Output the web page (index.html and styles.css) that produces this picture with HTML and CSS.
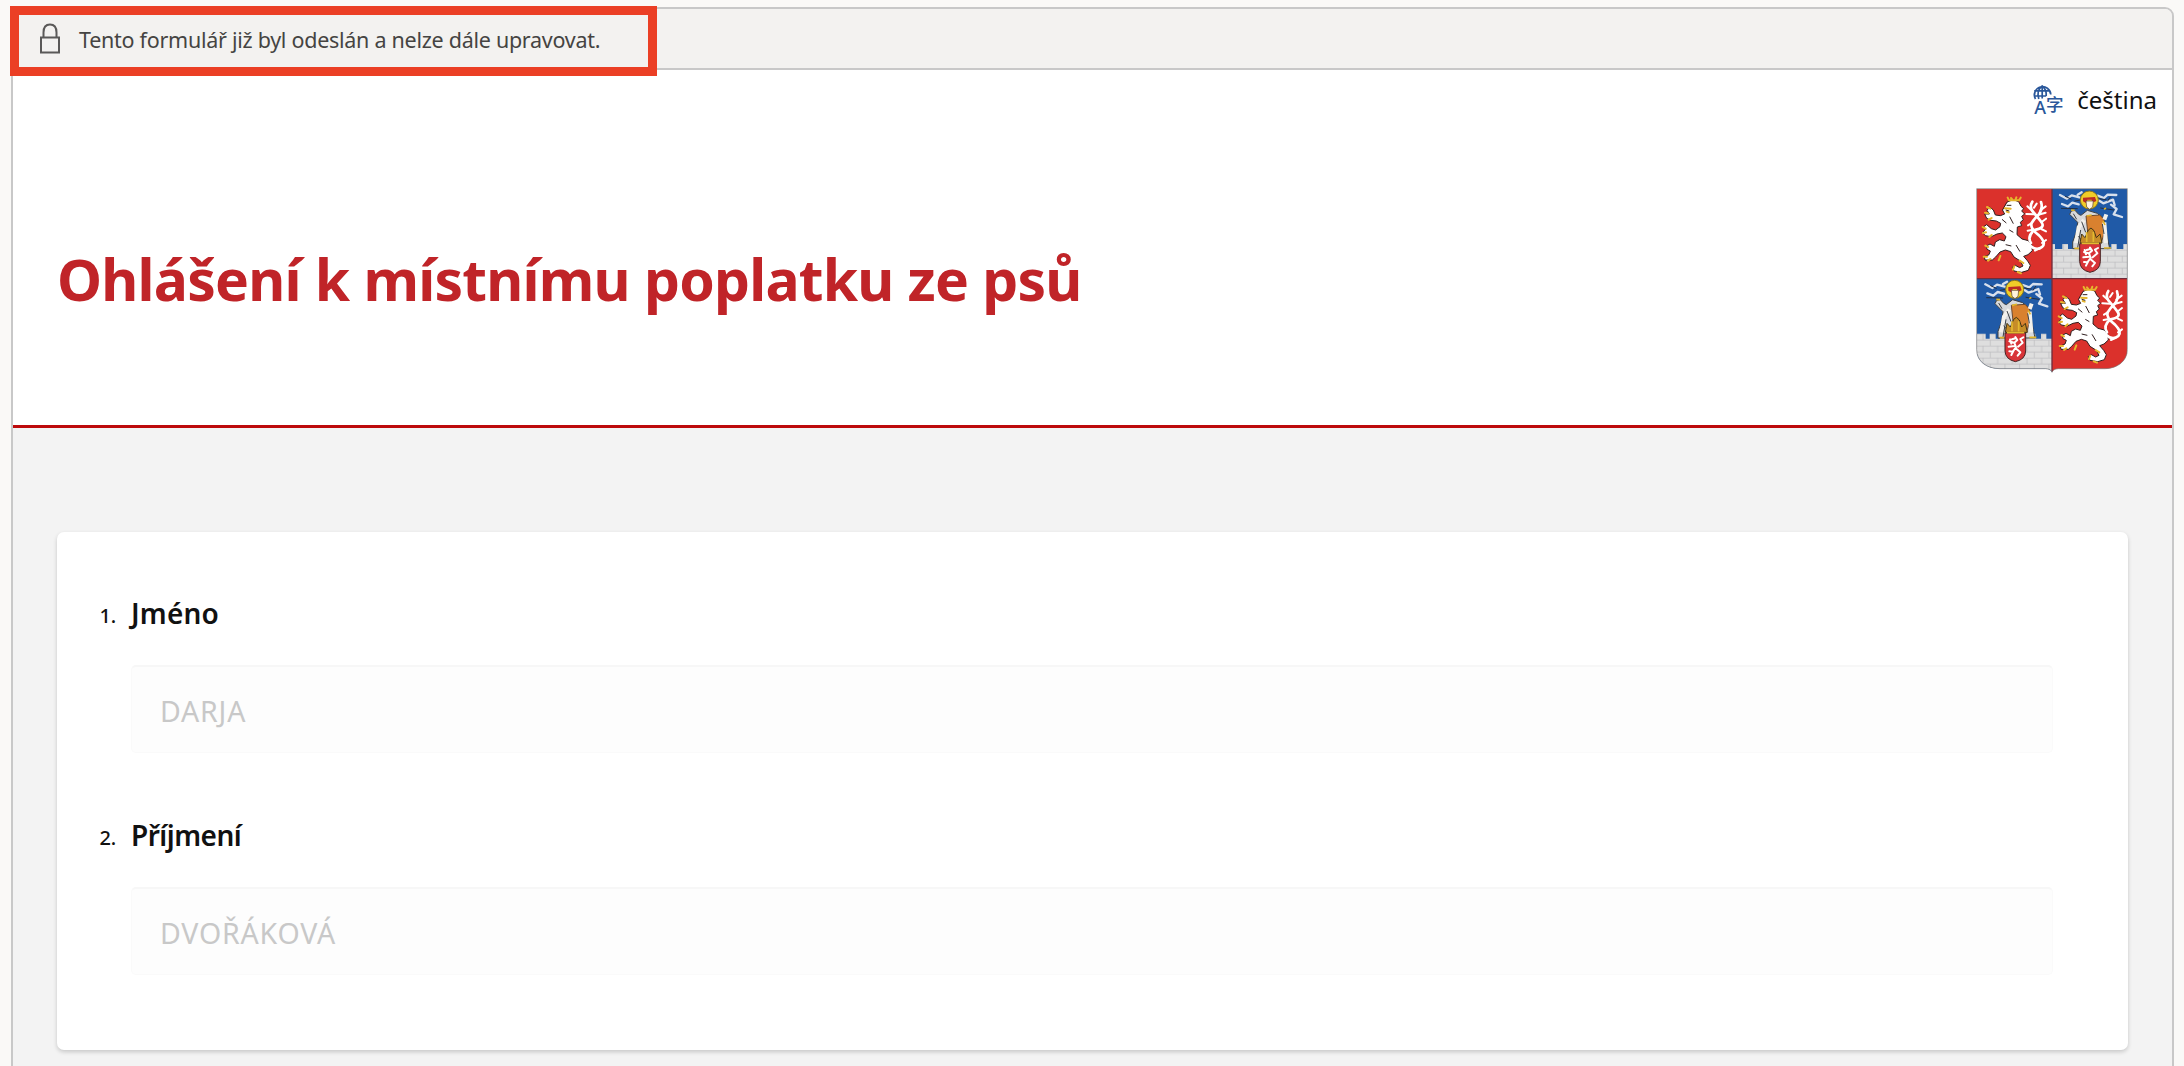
FILE: index.html
```html
<!DOCTYPE html>
<html lang="cs">
<head>
<meta charset="utf-8">
<title>Ohlášení k místnímu poplatku ze psů</title>
<link rel="stylesheet" href="styles.css">
</head>
<body>
<main class="panel">
  <div class="notice">
    <svg class="lock" viewBox="0 0 22 31" fill="none" stroke="#5a5958" stroke-width="2">
      <path d="M2 14.5h18v15H2zM4.5 14V9.500C4.500 4 7 1.500 11 1.500S17.500 4 17.500 9.500V14"/>
    </svg>
    <span class="notice-text">Tento formulář již byl odeslán a nelze dále upravovat.</span>
    <div class="highlight"></div>
  </div>
  <header class="header">
    <div class="language">
      <svg class="translate" viewBox="0 0 30 30" fill="none" stroke="#2a579a" stroke-width="1.700">
        <path d="M2.500 14A8.200 8.200 0 1 1 17.800 9.500M1.200 5.800h16M1.200 11h12M9.200 1v12.500M5.800 14C4.300 9 5 4 9.200 1c3.300 2.500 4.300 6 4 10"/>
        <text class="glyph" x="1.300" y="29" font-size="18">A</text>
        <text class="glyph cjk" x="13" y="26" font-size="17.500">字</text>
      </svg>
      <span class="language-name">čeština</span>
    </div>
    <div class="title-row">
      <h1 class="title">Ohlášení k místnímu poplatku ze psů</h1>
      <svg class="crest" viewBox="33 25 456 558">
        <defs>
          <clipPath id="shield"><path d="M35 27H487V510C487 545 455 567 420 567H280Q264 568 261 578Q258 568 242 567H105C65 567 35 545 35 510Z"/></clipPath>
          <g id="lion">
            <g stroke="#302020" stroke-width="3" stroke-linejoin="round" stroke-linecap="round">
              <path fill="#fff" d="M127 67L144 60 161 66 168 80 176 87 170 94 179 103 170 110 175 120 166 128 170 138 157 142 156 165 171 178 190 183 200 195 202 213 189 225 176 230 188 244 196 257 190 272 170 278 147 274 142 263 151 257 164 264 174 259 166 244 147 232 137 216 121 211 105 217 92 232 82 241 60 241 58 231 72 225 76 214 66 209 64 199 75 193 88 200 91 187 104 180 118 184 123 171 112 160 96 163 79 171 61 168 53 159 61 149 56 141 65 135 79 147 92 151 105 141 107 131 94 124 78 122 65 116 59 103 73 103 66 92 74 82 85 91 91 106 106 108 119 103 113 92Z"/>
            </g>
            <g fill="none" stroke="#fff" stroke-linecap="round" stroke-linejoin="round">
              <path stroke-width="8" d="M193 196Q214 216 232 201Q244 189 222 167Q194 146 200 130Q207 118 220 106Q235 88 228 67M198 190Q185 171 208 151Q243 145 229 127Q217 111 202 94Q193 80 202 66"/>
              <path stroke-width="6" d="M202 94L187 80M207 104L184 103M220 105L242 99M226 92L242 80M207 84L215 72M229 128L243 117M229 148L243 155M200 130L189 137M200 151L188 153M231 190L243 181M222 207L210 213"/>
            </g>
            <g fill="none" stroke="#e6b62d" stroke-width="6" stroke-linecap="round">
              <path d="M128 54L132 62H162L167 54M138 55L143 61M154 53L151 61M120 86L137 87M125 96L131 98M66 82L76 87M60 99L69 101M71 120L80 115M53 142L62 147M54 160L63 158M73 172L80 166M61 198L69 202M56 231L66 231M69 243L76 238M101 242L106 229M148 260L144 270M158 277L168 281M164 243L175 250"/>
            </g>
            <path fill="none" stroke="#302020" stroke-width="3" d="M125 77H139M122 91L133 94M134 111L145 132M111 119L124 130M133 151L145 158M122 195L139 199M153 196L165 216"/>
          </g>
          <g id="guardian">
            <g fill="none" stroke="#d8e0ec" stroke-width="7" stroke-linecap="round" stroke-linejoin="round">
              <path d="M343 53L320 47 306 57 285 46M341 74L322 69 309 80 291 73M350 38L338 45M398 48L417 55 428 45 454 46M399 61L415 71 444 60 449 76M438 75L455 88 446 104 471 112"/>
              <path stroke="#243044" stroke-width="3" d="M289 86L337 87M407 85L446 91M347 61L330 64M399 57L423 60M301 50L318 58M436 52L428 64"/>
            </g>
            <circle cx="373" cy="61" r="27" fill="#f0cd28" stroke="#8b7620" stroke-width="3"/>
            <path fill="#ba2b25" d="M354 54L390 52 394 64 382 69 380 60 367 60 364 71 354 65Z"/>
            <path fill="#fff3dc" stroke="#554030" stroke-width="2" d="M363 64H385L383 82 374 89 365 82Z"/>
            <path fill="#d8d9db" stroke="#3c4045" stroke-width="3" d="M348 107L367 92 397 101 416 119 434 207H323V187L334 157 338 128 314 104 319 94 330 92 341 104Z"/>
            <path fill="#d9812f" stroke="#6d4930" stroke-width="3" d="M363 109L404 106 417 119 419 153 409 190 383 186 369 165Z"/>
            <path fill="none" stroke="#f3f1ec" stroke-width="12" d="M333 190L341 143 357 121M418 120L424 104M418 128L423 190"/>
            <path fill="none" stroke="#3c4045" stroke-width="3" d="M350 126L362 158M340 170L352 184M412 133L417 163M325 102L335 119M347 151L338 204"/>
            <path fill="none" stroke="#e1b52a" stroke-width="5" d="M329 92L318 91M423 85L417 89M328 206H342M417 205H438M414 124L420 136M365 109L380 106"/>
            <path fill="#c68c28" stroke="#413414" stroke-width="3" d="M345 190L350 163 360 174 370 151 378 145 387 153 394 174 405 163 411 190Z"/>
            <path fill="#d83438" stroke="#472525" stroke-width="3" d="M344 192H406V246Q405 272 375 278Q345 271 344 246Z"/>
            <path fill="none" stroke="#e3b930" stroke-width="5" d="M350 191H402M365 157V187M385 157V187"/>
            <path fill="none" stroke="#fff" stroke-width="6" stroke-linecap="round" stroke-linejoin="round" d="M375 204L381 213 372 221 377 235 367 248 357 247M371 221L357 217M372 231L355 233M376 238L390 250 382 260M383 233L397 221 390 210 399 205M365 211L376 208M363 224L359 211M370 244L363 258"/>
          </g>
          <pattern id="bricks" x="262" y="210" width="44" height="36" patternUnits="userSpaceOnUse">
            <rect width="44" height="36" fill="#dedede"/>
            <path d="M0 1H44M0 19H44M12 1V19M34 19V36" fill="none" stroke="#b7b8ba" stroke-width="2"/>
          </pattern>
        </defs>
        <g clip-path="url(#shield)">
          <rect x="35" y="27" width="226" height="270" fill="#db312c"/>
          <rect x="261" y="27" width="226" height="270" fill="#205aa7"/>
          <rect x="35" y="297" width="226" height="284" fill="#205aa7"/>
          <rect x="261" y="297" width="226" height="284" fill="#db312c"/>
          <path fill="url(#bricks)" d="M261 193H270V208H292V193H309V208H332V193H418V208H439V193H455V208H475V193H487V295H261Z"/>
          <path fill="url(#bricks)" d="M35 462H62V477H74V462H92V477H105V462H211V477H228V462H244V477H261V580H35Z"/>
          <use href="#lion"/><use href="#lion" x="228" y="268"/>
          <use href="#guardian"/><use href="#guardian" x="-224" y="268"/>
          <path d="M35 297H487M261 27V580" fill="none" stroke="#702c3b" stroke-width="4"/>
        </g>
        <path d="M35 27H487V510C487 545 455 567 420 567H280Q264 568 261 578Q258 568 242 567H105C65 567 35 545 35 510Z" fill="none" stroke="#777" stroke-width="2"/>
      </svg>
    </div>
  </header>
  <div class="content">
    <form class="card">
      <div class="question">
        <span class="number">1.</span>
        <span class="label">Jméno</span>
        <div class="answer">DARJA</div>
      </div>
      <div class="question">
        <span class="number">2.</span>
        <span class="label label-tight">Příjmení</span>
        <div class="answer">DVOŘÁKOVÁ</div>
      </div>
    </form>
  </div>
</main>
</body>
</html>
```
FILE: styles.css
```css
* { box-sizing: border-box; }
body {
  margin: 0;
  height: 1066px;
  padding: 7px 10px 0 11px;
  overflow: hidden;
  background: #faf9f7;
  font-family: "Noto Sans", "Open Sans", sans-serif;
  color: #111;
}
.panel {
  height: 1080px;
  border: 2px solid #c8c8c8;
  border-radius: 9px 9px 0 0;
  background: #f3f3f3;
}
.notice {
  position: relative;
  display: flex;
  align-items: center;
  height: 61px;
  padding-left: 26px;
  border-bottom: 2px solid #c8c8c8;
  border-radius: 7px 7px 0 0;
  background: #f3f2f0;
  color: #454442;
}
.lock { width: 22px; height: 31px; margin-right: 18px; }
.notice-text {
  padding-top: 2px;
  font-size: 21.5px;
  line-height: 30px;
  letter-spacing: -.27px;
  white-space: nowrap;
}
.highlight {
  position: absolute;
  left: -3px;
  top: -3px;
  width: 647px;
  height: 70px;
  border: 9px solid #eb3f25;
}
.header { height: 358px; border-bottom: 3px solid #bd0a0c; background: #fff; }
.language {
  display: flex;
  align-items: center;
  justify-content: flex-end;
  height: 59px;
  padding-right: 15px;
}
.translate { width: 30px; height: 30px; margin-right: 14px; overflow: visible; }
.glyph { fill: #2a579a; stroke: none; font-family: "Noto Sans", sans-serif; font-weight: 500; }
.cjk { font-family: "Noto Sans CJK SC", sans-serif; }
.language-name { font-size: 24px; line-height: 30px; }
.title-row {
  display: flex;
  align-items: center;
  justify-content: space-between;
  height: 186px;
  margin-top: 59px;
  padding: 0 44px;
}
.title {
  margin: 0 0 4px;
  font-size: 57px;
  line-height: 70px;
  font-weight: 700;
  letter-spacing: -.78px;
  color: #c02428;
  white-space: nowrap;
}
.crest { width: 152px; height: 186px; }
.content { padding: 104px 44px 0; }
.card {
  height: 518px;
  padding: 62px 75px 0 42px;
  border-radius: 7px;
  background: #fff;
  box-shadow: 0 2px 4px rgba(0, 0, 0, .18);
}
.question {
  display: grid;
  grid-template-columns: 17px 1fr;
  grid-template-rows: 40px 88px;
  column-gap: 15px;
  row-gap: 31px;
  margin-bottom: 63px;
}
.number { justify-self: end; font-size: 20px; line-height: 44px; font-weight: 500; letter-spacing: -.2px; }
.label { font-size: 28px; line-height: 39px; font-weight: 600; letter-spacing: .2px; }
.label-tight { letter-spacing: -.5px; }
.answer {
  grid-column: 2;
  display: flex;
  align-items: center;
  padding: 3px 28px 0;
  border: 1px solid #fafafa;
  border-top: 2px solid #f7f7f7;
  border-radius: 5px;
  background: #fdfdfd;
  font-size: 28.5px;
  line-height: 40px;
  letter-spacing: .8px;
  color: #c8c8c8;
}
```
